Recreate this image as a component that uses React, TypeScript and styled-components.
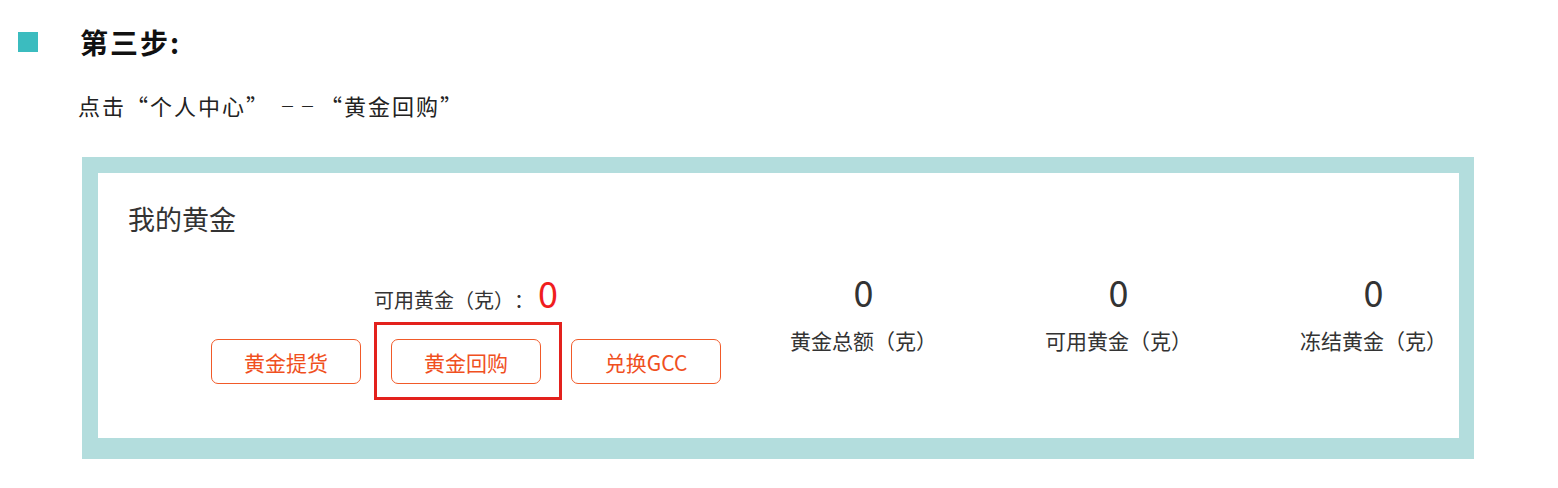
import React from "react";
import styled, { createGlobalStyle } from "styled-components";

const Global = createGlobalStyle`
  html, body { margin: 0; padding: 0; background: #ffffff; }
  body {
    font-family: "Noto Sans CJK SC", "Noto Sans", sans-serif;
    color: #333333;
    text-spacing-trim: space-all;
  }
  * { box-sizing: border-box; }
`;

const Page = styled.div`
  width: 1558px;
  height: 488px;
  overflow: hidden;
  display: flex;
  flex-direction: column;
`;

const StepHeader = styled.div`
  display: flex;
  align-items: center;
  gap: 42px;
  margin-top: 22px;
  padding-left: 18px;
`;

const Marker = styled.span`
  width: 20px;
  height: 20px;
  background: #3bbcbf;
  flex: none;
`;

const StepTitle = styled.h2`
  margin: 0;
  font-size: 28px;
  line-height: 40px;
  font-weight: 700;
  letter-spacing: 2px;
  color: #111111;
`;

const Instruction = styled.p`
  margin: 28px 0 0 78px;
  font-size: 22px;
  line-height: 30px;
  letter-spacing: 2px;
  font-feature-settings: "fwid" 1;
  color: #222222;
`;

const Dashes = styled.span`
  display: inline-block;
  padding-left: 10px;
  font-size: 15px;
  letter-spacing: 5px;
  vertical-align: 3px;
`;

const Frame = styled.section`
  margin: 36px 0 0 82px;
  width: 1392px;
  background: #b3dddd;
  padding: 16px 15px 21px 16px;
`;

const Card = styled.div`
  background: #ffffff;
  padding: 28px 0 54px 30px;
  display: flex;
  flex-direction: column;
`;

const CardTitle = styled.h3`
  margin: 0;
  font-size: 27px;
  line-height: 36px;
  font-weight: 400;
  color: #333333;
`;

const Content = styled.div`
  display: flex;
  margin-top: 34px;
  padding-left: 83px;
`;

const ActionBlock = styled.div`
  width: 510px;
  display: flex;
  flex-direction: column;
  align-items: center;
`;

const AvailableRow = styled.div`
  display: flex;
  align-items: baseline;
  height: 40px;
  margin-top: 1px;
`;

const AvailableLabel = styled.span`
  font-size: 20px;
  color: #333333;
`;

const AvailableValue = styled.span`
  font-size: 36px;
  line-height: 40px;
  color: #f01e1e;
  margin-left: 4px;
`;

const Buttons = styled.div`
  display: flex;
  gap: 30px;
  margin-top: 27px;
`;

const ButtonSlot = styled.div`
  position: relative;
`;

const ActionButton = styled.button`
  width: 150px;
  height: 45px;
  border: 1px solid #f15a29;
  border-radius: 7px;
  background: #ffffff;
  color: #f0501e;
  font-family: "Noto Sans CJK SC", "Noto Sans", sans-serif;
  font-size: 21px;
  padding: 0;
  cursor: pointer;
`;

const Highlight = styled.span`
  position: absolute;
  top: -17px;
  left: -17px;
  right: -21px;
  bottom: -16px;
  border: 3px solid #e3211d;
  pointer-events: none;
`;

const Stats = styled.div`
  display: flex;
  margin-left: 15px;
`;

const Stat = styled.div`
  width: 255px;
  display: flex;
  flex-direction: column;
  align-items: center;
`;

const StatValue = styled.span`
  font-size: 36px;
  line-height: 40px;
  color: #333333;
`;

const StatLabel = styled.span`
  margin-top: 15px;
  font-size: 21px;
  line-height: 28px;
  color: #333333;
`;

const actions = [
  { label: "黄金提货", highlighted: false },
  { label: "黄金回购", highlighted: true },
  { label: "兑换GCC", highlighted: false },
];

const stats = [
  { value: "0", label: "黄金总额（克）" },
  { value: "0", label: "可用黄金（克）" },
  { value: "0", label: "冻结黄金（克）" },
];

export default function App() {
  return (
    <>
      <Global />
      <Page>
        <StepHeader>
          <Marker />
          <StepTitle>第三步:</StepTitle>
        </StepHeader>
        <Instruction>
          点击“个人中心”<Dashes>--</Dashes>“黄金回购”
        </Instruction>
        <Frame>
          <Card>
            <CardTitle>我的黄金</CardTitle>
            <Content>
              <ActionBlock>
                <AvailableRow>
                  <AvailableLabel>可用黄金（克）：</AvailableLabel>
                  <AvailableValue>0</AvailableValue>
                </AvailableRow>
                <Buttons>
                  {actions.map((a) => (
                    <ButtonSlot key={a.label}>
                      <ActionButton>{a.label}</ActionButton>
                      {a.highlighted && <Highlight />}
                    </ButtonSlot>
                  ))}
                </Buttons>
              </ActionBlock>
              <Stats>
                {stats.map((s) => (
                  <Stat key={s.label}>
                    <StatValue>{s.value}</StatValue>
                    <StatLabel>{s.label}</StatLabel>
                  </Stat>
                ))}
              </Stats>
            </Content>
          </Card>
        </Frame>
      </Page>
    </>
  );
}
